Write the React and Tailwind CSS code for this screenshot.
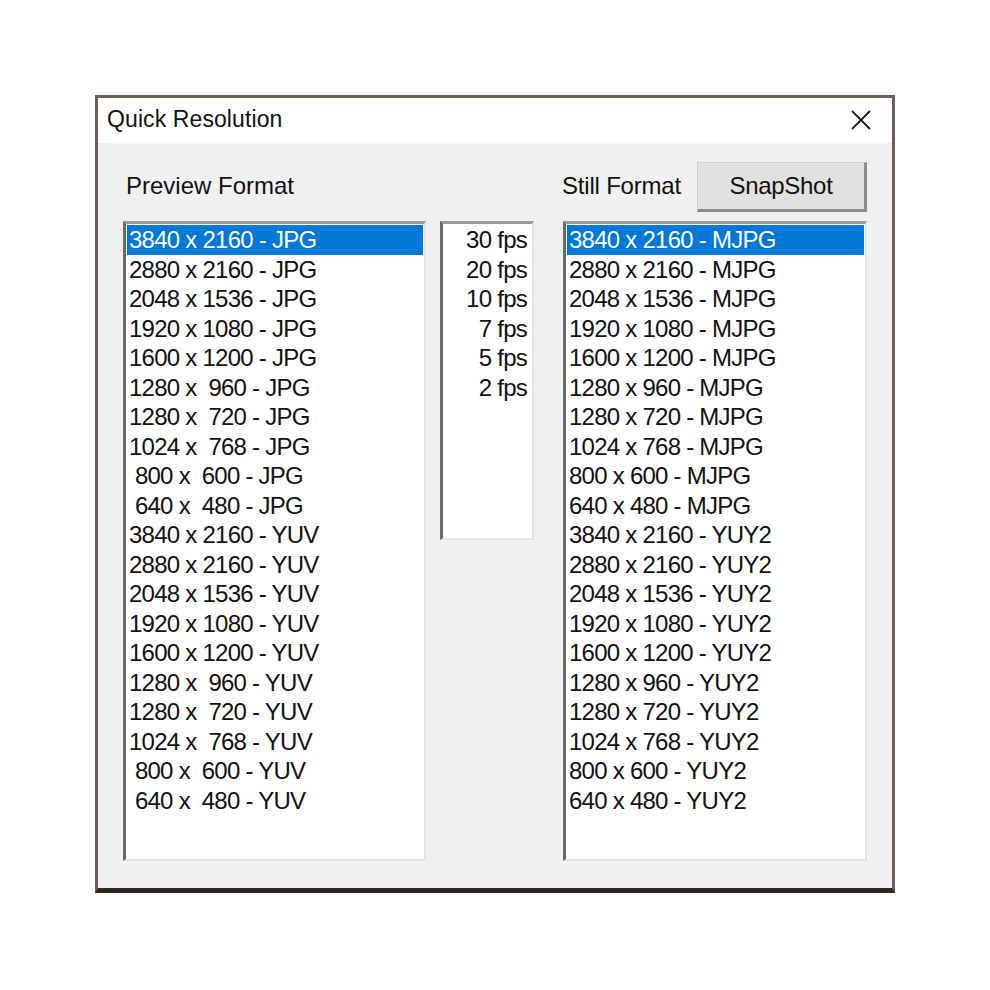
import React from 'react';

const previewFormats = [
  '3840 x 2160 - JPG',
  '2880 x 2160 - JPG',
  '2048 x 1536 - JPG',
  '1920 x 1080 - JPG',
  '1600 x 1200 - JPG',
  '1280 x  960 - JPG',
  '1280 x  720 - JPG',
  '1024 x  768 - JPG',
  ' 800 x  600 - JPG',
  ' 640 x  480 - JPG',
  '3840 x 2160 - YUV',
  '2880 x 2160 - YUV',
  '2048 x 1536 - YUV',
  '1920 x 1080 - YUV',
  '1600 x 1200 - YUV',
  '1280 x  960 - YUV',
  '1280 x  720 - YUV',
  '1024 x  768 - YUV',
  ' 800 x  600 - YUV',
  ' 640 x  480 - YUV',
];

const stillFormats = [
  '3840 x 2160 - MJPG',
  '2880 x 2160 - MJPG',
  '2048 x 1536 - MJPG',
  '1920 x 1080 - MJPG',
  '1600 x 1200 - MJPG',
  '1280 x 960 - MJPG',
  '1280 x 720 - MJPG',
  '1024 x 768 - MJPG',
  '800 x 600 - MJPG',
  '640 x 480 - MJPG',
  '3840 x 2160 - YUY2',
  '2880 x 2160 - YUY2',
  '2048 x 1536 - YUY2',
  '1920 x 1080 - YUY2',
  '1600 x 1200 - YUY2',
  '1280 x 960 - YUY2',
  '1280 x 720 - YUY2',
  '1024 x 768 - YUY2',
  '800 x 600 - YUY2',
  '640 x 480 - YUY2',
];

const fpsList = ['30 fps', '20 fps', '10 fps', '7 fps', '5 fps', '2 fps'];

// sunken win32-style list box
const ListBox = ({ items, selected, className = '', alignRight = false }) => (
  <div
    className={`bg-white border-t-[3px] border-l-[3px] border-b-2 border-r-2 border-t-[#9a9a9a] border-l-[#6a6a6a] border-b-[#e4e4e4] border-r-[#e4e4e4] pt-px px-px overflow-hidden ${className}`}
  >
    {items.map((item, i) => (
      <div
        key={i}
        className={`h-[29.5px] leading-[29.5px] whitespace-pre text-[24px] tracking-[-0.75px] ${
          alignRight ? 'text-right pr-[4px]' : 'pl-[2px]'
        } ${i === selected ? 'bg-[#0078d7] text-white' : 'text-[#111]'}`}
      >
        {item}
      </div>
    ))}
  </div>
);

const App = () => {
  return (
    <div className="w-[990px] h-[990px] bg-white pt-[95px] pl-[95px] font-['Liberation_Sans',Arial,sans-serif]">
      <div className="w-[800px] h-[798px] flex flex-col border-[3px] border-[#6e5e55] border-b-[5px] border-b-[#2e2622] bg-[#f0f0f0]">
        {/* title bar */}
        <div className="h-[45px] shrink-0 bg-white flex items-center justify-between pl-[9px] pr-[20px]">
          <span className="text-[23px] text-[#111] tracking-[0.1px] -mt-[2px]">Quick Resolution</span>
          <svg width="22" height="22" viewBox="0 0 22 22" className="-mt-[2px]">
            <path d="M2 2 L20 20 M20 2 L2 20" stroke="#1a1a1a" strokeWidth="1.8" fill="none" />
          </svg>
        </div>

        {/* body */}
        <div className="flex-1 flex pl-[25px] pt-[19px]">
          {/* preview column */}
          <div className="w-[303px] flex flex-col">
            <div className="h-[50px] flex items-center pl-[3px] pb-[3px] text-[24px] text-[#111]">
              Preview Format
            </div>
            <ListBox items={previewFormats} selected={0} className="mt-[9px] h-[640px]" />
          </div>

          {/* fps column */}
          <div className="w-[94px] ml-[14px] flex flex-col">
            <div className="h-[50px]" />
            <ListBox items={fpsList} selected={-1} alignRight className="mt-[9px] h-[319px]" />
          </div>

          {/* still column */}
          <div className="w-[304px] ml-[29px] flex flex-col">
            <div className="h-[50px] flex items-center justify-between">
              <span className="text-[24px] text-[#111] tracking-[-0.2px] -ml-px pb-[3px]">Still Format</span>
              <button className="w-[170px] h-[50px] bg-[#e1e1e1] border border-t-[#cfcfcf] border-l-[#cfcfcf] border-b-[3px] border-r-[3px] border-b-[#8c8c8c] border-r-[#8c8c8c] text-[24px] text-[#111] tracking-[-0.3px]">
                SnapShot
              </button>
            </div>
            <ListBox items={stillFormats} selected={0} className="mt-[9px] h-[640px]" />
          </div>
        </div>
      </div>
    </div>
  );
};

export default App;
